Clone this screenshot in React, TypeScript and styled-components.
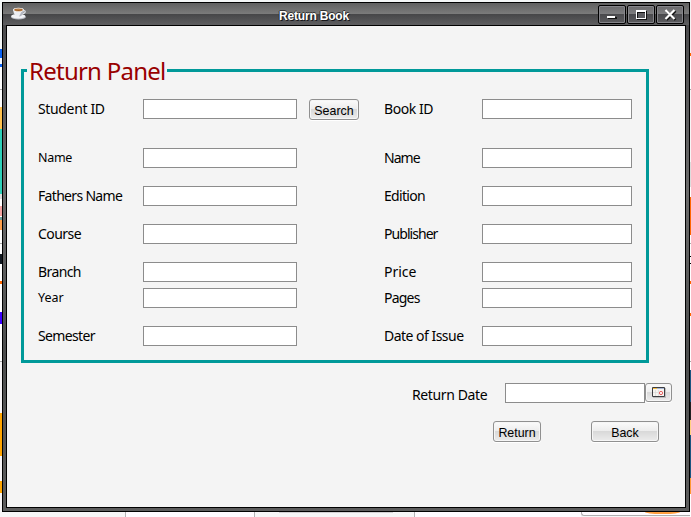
import React from "react";
import styled, { createGlobalStyle } from "styled-components";

const GlobalStyle = createGlobalStyle`
  * { box-sizing: border-box; }
  body { margin: 0; overflow: hidden; background: #f4f4f4; }
`;

const UI_FONT = `"Noto Sans", "DejaVu Sans", sans-serif`;
const CONTROL_FONT = `"Liberation Sans", Arial, sans-serif`;

type Band = [color: string, size: number];

const toGradient = (direction: string, bands: Band[]) => {
  let offset = 0;
  const stops = bands.map(([color, size]) => {
    const start = offset;
    offset += size;
    return `${color} ${start}px ${offset}px`;
  });
  return `linear-gradient(${direction}, ${stops.join(", ")})`;
};

const leftBands: Band[] = [
  ["#f4f7f7", 49], ["#0b62f4", 9], ["#f4f8ff", 6], ["#0b62f4", 3], ["#fdfdfd", 22],
  ["#aaaaaa", 1], ["#fdfdfd", 17], ["#ffc14d", 22], ["#2ed0b9", 65], ["#dedede", 5],
  ["#ffffff", 7], ["#f5a3a0", 10], ["#ffffff", 1], ["#70a09b", 3], ["#ffa04d", 10],
  ["#ffffff", 13], ["#aaaaaa", 1], ["#ffffff", 10], ["#111820", 10], ["#ffffff", 17],
  ["#ff6600", 3], ["#ffffff", 28], ["#3b00ff", 12], ["#ffffff", 37], ["#aaaaaa", 1],
  ["#f7f5f7", 51], ["#ffa500", 43], ["#f7f5f7", 25], ["#ffa500", 12], ["#f7f5f7", 24],
];

const rightBands: Band[] = [
  ["#f4f4f4", 53], ["#ff6600", 3], ["#ffffff", 33], ["#aaaaaa", 1], ["#f6f6f6", 72],
  ["#dddddd", 25], ["#ffffff", 10], ["#ff6600", 38], ["#ffffff", 8], ["#aaaaaa", 1],
  ["#ffffff", 12], ["#000000", 1], ["#ffffff", 6], ["#000000", 1], ["#ffffff", 17],
  ["#ff6600", 3], ["#ffffff", 29], ["#ff6600", 3], ["#ffffff", 45], ["#aaaaaa", 1],
  ["#ffffff", 8], ["#1a5580", 32], ["#202020", 18], ["#ffd080", 15], ["#1a5580", 43],
  ["#ff9933", 16], ["#ffffff", 23],
];

const Desktop = styled.div`
  width: 691px;
  height: 517px;
  padding: 2px 1px 0 2px;
  background:
    ${toGradient("to bottom", leftBands)} 0 0 / 2px 517px no-repeat,
    ${toGradient("to bottom", rightBands)} 690px 0 / 1px 517px no-repeat,
    #f4f6f6;
`;

const Window = styled.main`
  display: flex;
  flex-direction: column;
  width: 688px;
  height: 510px;
  padding: 0 3px 3px;
  border: 1px solid #000;
  background: linear-gradient(#6b6b6b 0, #4b4b4d 22px, #6a6a6a 190px, #4c4d4d 350px, #5c5c5c 100%);
`;

const TitleBar = styled.header`
  display: grid;
  grid-template-columns: 24px 1fr 91px;
  align-items: center;
  height: 22px;
  margin: 0 -3px;
  padding: 0 5px 0 8px;
  background: linear-gradient(#606060 0, #7b7b7b 11px, #464648 11px, #5e5e60 22px);
`;

const Title = styled.h1`
  margin: 3px 0 0;
  text-align: center;
  color: #fff;
  font: bold 12px/16px ${CONTROL_FONT};
  letter-spacing: -0.2px;
  text-shadow: 1px 1px #17171b, -1px 0 #333, 0 -1px #333;
`;

const WindowControls = styled.div`
  display: flex;
  justify-content: flex-end;
  gap: 1px;
`;

const WindowButton = styled.button`
  display: grid;
  place-items: center;
  width: 28px;
  height: 19px;
  padding: 0;
  border: 1px solid #000;
  border-radius: 2px;
  background: linear-gradient(#69696b 0, #7d7d7f 8px, #49494c 8px, #5c5c5f 100%);
  box-shadow: inset 0 0 0 1px #85858a;
`;

const Content = styled.section`
  flex: 1;
  border: 1px solid #000;
  background: #f4f4f4;
  padding: 43px 0 0 14px;
`;

const Panel = styled.fieldset`
  min-width: 0;
  width: 628px;
  height: 294px;
  margin: 0;
  padding: 0 14px;
  border: 3px solid #009999;
`;

const Legend = styled.legend`
  width: 140px;
  height: 3px;
  margin-left: -11px;
  padding: 0 2px;
  color: #990000;
  font: 24px/4px ${UI_FONT};
  letter-spacing: -0.75px;
  white-space: nowrap;
`;

const FieldGrid = styled.div`
  display: grid;
  grid-template-columns: 105px 154px 87px 98px 150px;
  grid-template-rows: 49px 38px 38px 38px 26px 38px 20px;
  margin-top: 27px;
`;

const Label = styled.label<{ $small?: boolean; $spacing?: number }>`
  height: 20px;
  color: #000;
  font: ${({ $small }) => ($small ? 12.5 : 14)}px/20px ${UI_FONT};
  letter-spacing: ${({ $spacing = 0 }) => $spacing}px;
  white-space: nowrap;
`;

const TextField = styled.input`
  width: 100%;
  height: 20px;
  padding: 0 3px;
  border: 1px solid #8c8c8c;
  border-radius: 0;
  background: #fff;
  outline: none;
`;

const PushButton = styled.button<{ $width: number; $height?: number }>`
  display: flex;
  flex-shrink: 0;
  align-items: center;
  justify-content: center;
  width: ${({ $width }) => $width}px;
  height: ${({ $height = 21 }) => $height}px;
  padding: 2px 0 0;
  border: 1px solid #909090;
  border-radius: 3px;
  background: linear-gradient(#fbfbfb 0, #ededed 47%, #d9d9d9 50%, #ececec 100%);
  box-shadow: inset 0 0 0 1px #f6f6f6, 0 1px #fff;
  color: #000;
  font: 12.4px/16px ${CONTROL_FONT};
`;

const IconButton = styled(PushButton)`
  padding: 0;
`;

const SearchCell = styled.div`
  padding-left: 12px;
`;

const DateRow = styled.div`
  display: grid;
  grid-template-columns: 93px 140px 27px;
  height: 20px;
  margin: 20px 0 0 391px;
`;

const DateLabel = styled(Label)`
  margin-top: 2px;
`;

const Actions = styled.div`
  display: flex;
  gap: 50px;
  margin: 18px 0 0 472px;
`;

const BottomStrip = styled.footer`
  display: flex;
  height: 5px;
  background: #f7f6f7;
`;

const StripCell = styled.div<{ $width: number; $light?: boolean }>`
  width: ${({ $width }) => $width}px;
  border-right: 1px solid #b5b3b5;
  background: ${({ $light }) => ($light ? "#fffbff" : "#f7f6f7")};
`;

const StripCard = styled.div`
  flex: 1;
  height: 4px;
  padding-left: 63px;
  border: solid #b0aeb0;
  border-width: 0 0 1px 1px;
  border-bottom-left-radius: 3px;
  background: #fffbff;
`;

const CardAccent = styled.div`
  width: 35px;
  height: 2px;
  border-radius: 0 0 16px 16px / 0 0 2px 2px;
  background: #ff9f40;
`;

const StripGap = styled.div`
  width: 166px;
  background: #fffbff;
`;

const StripShade = styled.div`
  width: 114px;
  height: 1px;
  margin-left: 24px;
  background: #d4d2d4;
`;

const CupIcon = () => (
  <svg width="16" height="14" viewBox="0 0 16 14">
    <ellipse cx="7.5" cy="9.9" rx="7.4" ry="2.6" fill="#b8bbc4" />
    <ellipse cx="7.2" cy="9.2" rx="7" ry="2.3" fill="#f2f3f6" />
    <path d="M12 3.5c3-.6 3.2 2.8-.8 3.2" fill="none" stroke="#e6e8ee" strokeWidth="1.1" />
    <path d="M2.2 2.5h10.6c0 3.6-1.8 7-5.3 7s-5.3-3.4-5.3-7z" fill="#eceef3" />
    <path d="M8 9.5c3-.2 4.6-3 4.8-6.5l-2.3 1.8z" fill="#b3b6c0" />
    <ellipse cx="7.5" cy="2.8" rx="5.3" ry="2" fill="#fff" />
    <ellipse cx="7.5" cy="2.9" rx="4.3" ry="1.4" fill="#9a5a23" />
    <path d="M4 3.3q3.5-1.4 7 0" fill="none" stroke="#d8a060" strokeWidth=".7" />
  </svg>
);

const MinimizeIcon = () => (
  <svg width="16" height="15" shapeRendering="crispEdges">
    <path d="M4 10h9v2H4z" fill="#111" />
    <path d="M3 9h8v2H3z" fill="#fff" />
  </svg>
);

const MaximizeIcon = () => (
  <svg width="16" height="15" shapeRendering="crispEdges">
    <path d="M4 4h10v9H4z" fill="#111" />
    <path d="M3 3h10v9H3z" fill="#fff" />
    <path d="M4 5h8v6H4z" fill="#111" />
    <path d="M5 6h7v5H5z" fill="#5c5c60" />
  </svg>
);

const CloseIcon = () => (
  <svg width="16" height="15">
    <path d="M4.5 4l9 9M13.5 4l-9 9" stroke="#111" strokeWidth="2.4" />
    <path d="M3.5 3l9 9M12.5 3l-9 9" stroke="#fff" strokeWidth="2.2" />
  </svg>
);

const CalendarIcon = () => (
  <svg width="14" height="11" viewBox="0 0 14 11">
    <path d="M1 1h13v10H1z" fill="#bdbdbd" />
    <path d="M.5.5h12v9H.5z" fill="#f6f3ef" stroke="#3c3d40" />
    <path d="M1 1.5h4" stroke="#f3bc45" />
    <path d="M5 1.5h7" stroke="#a9b7d4" />
    <path d="M3.5 3v6M6.5 3v6M1 5.5h5" stroke="#d8d8d8" strokeWidth=".7" />
    <circle cx="9" cy="6" r="1.6" fill="#fff" stroke="#e75b5b" />
  </svg>
);

interface FieldLabel {
  text: string;
  spacing?: number;
  small?: boolean;
}

const rows: [FieldLabel, FieldLabel][] = [
  [{ text: "Student ID", spacing: -0.35 }, { text: "Book ID", spacing: -0.45 }],
  [{ text: "Name", small: true, spacing: -0.3 }, { text: "Name", spacing: -0.95 }],
  [{ text: "Fathers Name", spacing: -0.68 }, { text: "Edition", spacing: -0.7 }],
  [{ text: "Course", spacing: -0.55 }, { text: "Publisher", spacing: -0.95 }],
  [{ text: "Branch", spacing: -0.6 }, { text: "Price" }],
  [{ text: "Year", small: true }, { text: "Pages", spacing: -0.8 }],
  [{ text: "Semester", spacing: -0.65 }, { text: "Date of Issue", spacing: -0.52 }],
];

const App = () => (
  <>
    <GlobalStyle />
    <Desktop>
      <Window>
        <TitleBar>
          <CupIcon />
          <Title>Return Book</Title>
          <WindowControls>
            <WindowButton aria-label="Minimize"><MinimizeIcon /></WindowButton>
            <WindowButton aria-label="Maximize"><MaximizeIcon /></WindowButton>
            <WindowButton aria-label="Close"><CloseIcon /></WindowButton>
          </WindowControls>
        </TitleBar>
        <Content>
          <Panel>
            <Legend>Return Panel</Legend>
            <FieldGrid>
              {rows.map(([left, right], index) => (
                <React.Fragment key={index}>
                  <Label $small={left.small} $spacing={left.spacing}>{left.text}</Label>
                  <TextField aria-label={left.text} />
                  <SearchCell>{index === 0 && <PushButton $width={50}>Search</PushButton>}</SearchCell>
                  <Label $spacing={right.spacing}>{right.text}</Label>
                  <TextField aria-label={right.text} />
                </React.Fragment>
              ))}
            </FieldGrid>
          </Panel>
          <DateRow>
            <DateLabel $spacing={-0.38}>Return Date</DateLabel>
            <TextField aria-label="Return Date" />
            <IconButton $width={27} $height={19} aria-label="Pick a date"><CalendarIcon /></IconButton>
          </DateRow>
          <Actions>
            <PushButton $width={48}>Return</PushButton>
            <PushButton $width={68}>Back</PushButton>
          </Actions>
        </Content>
      </Window>
      <BottomStrip>
        <StripCell $width={124} />
        <StripCell $width={129} $light />
        <StripCell $width={160}><StripShade /></StripCell>
        <StripGap />
        <StripCard><CardAccent /></StripCard>
      </BottomStrip>
    </Desktop>
  </>
);

export default App;
